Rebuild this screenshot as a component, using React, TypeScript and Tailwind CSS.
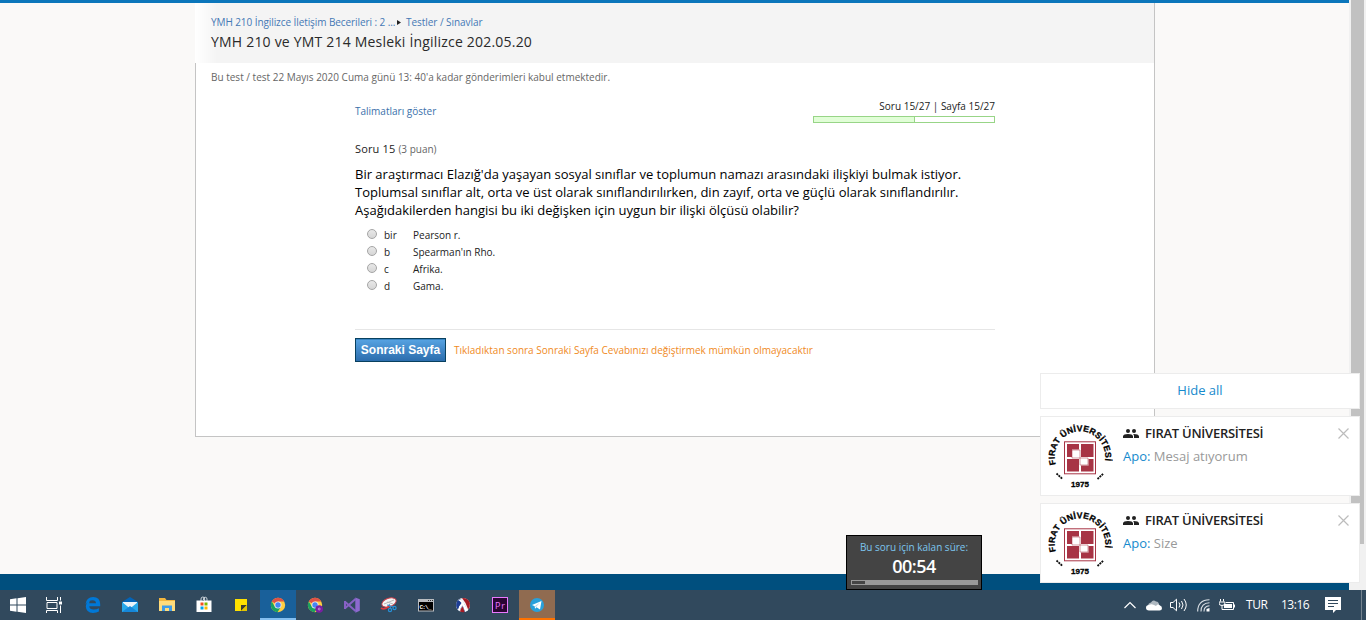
import React from "react";

const options = [
  { key: "bir", text: "Pearson r." },
  { key: "b", text: "Spearman'ın Rho." },
  { key: "c", text: "Afrika." },
  { key: "d", text: "Gama." },
];

function Header() {
  return (
    <header className="flex h-[60px] flex-col bg-[linear-gradient(to_right,#ffffff_0,#f4f4f4_22px)] pl-[16px]">
      <nav className="mt-[11px] flex h-[16px] items-center whitespace-nowrap text-[10px] leading-[16px] text-[#4478b4]">
        <span className="w-[186px] tracking-[-0.08px]">YMH 210 İngilizce İletişim Becerileri : 2 ...</span>
        <svg className="mr-[5px] h-[5px] w-[4px]" viewBox="0 0 4 5">
          <path d="M0 0 4 2.5 0 5Z" fill="#222" />
        </svg>
        <span className="tracking-[-0.05px]">Testler / Sınavlar</span>
      </nav>
      <h1 className="mt-[3px] whitespace-nowrap text-[14px] font-medium leading-[18px] tracking-[0.2px] text-[#2a2a2a]">
        YMH 210 ve YMT 214 Mesleki İngilizce 202.05.20
      </h1>
    </header>
  );
}

function Question() {
  return (
    <main className="flex h-[374px] flex-col border-b border-l border-[#c4c4c4] bg-white">
      <p className="mt-[6px] ml-[15px] h-[17px] whitespace-nowrap text-[10px] leading-[17px] text-[#666]">
        Bu test / test 22 Mayıs 2020 Cuma günü 13: 40'a kadar gönderimleri kabul etmektedir.
      </p>
      <div className="mt-[12px] ml-[158px] flex w-[641px] flex-col pl-px">
        <div className="flex h-[41px] justify-between">
          <a className="mt-[5px] text-[10px] leading-[16px] text-[#3a70aa]">Talimatları göster</a>
          <div className="flex flex-col items-end">
            <span className="text-[10px] font-medium leading-[16px] text-[#222]">Soru 15/27 | Sayfa 15/27</span>
            <div className="mt-[2px] flex h-[7px] w-[182px] border border-[#98d587]">
              <div className="w-[101px] border-r border-[#98d587] bg-[#e1fed7]" />
            </div>
          </div>
        </div>
        <div className="mt-[2px] flex h-[16px] items-baseline gap-[3px] whitespace-nowrap leading-[16px]">
          <b className="text-[11px] font-medium tracking-[0.15px] text-[#222]">Soru 15</b>
          <span className="text-[10px] text-[#666]">(3 puan)</span>
        </div>
        <div className="mt-[8px] whitespace-nowrap text-[13px] leading-[18px] text-black">
          <p>Bir araştırmacı Elazığ'da yaşayan sosyal sınıflar ve toplumun namazı arasındaki ilişkiyi bulmak istiyor.</p>
          <p>Toplumsal sınıflar alt, orta ve üst olarak sınıflandırılırken, din zayıf, orta ve güçlü olarak sınıflandırılır.</p>
          <p>Aşağıdakilerden hangisi bu iki değişken için uygun bir ilişki ölçüsü olabilir?</p>
        </div>
        <div className="mt-[7px] flex flex-col pl-[12px]">
          {options.map((o) => (
            <label key={o.key} className="flex h-[17px] text-[10px] leading-[18px] text-[#222]">
              <span className="mt-[3px] mr-[7px] h-[10px] w-[10px] rounded-full border border-[#a5a5a5] bg-linear-to-b from-[#e8e8e8] to-[#d6d6d6]" />
              <span className="w-[29px]">{o.key}</span>
              <span className="whitespace-nowrap">{o.text}</span>
            </label>
          ))}
        </div>
        <div className="mt-[35px] border-t border-[#e6e6e6]" />
        <div className="mt-[8px] flex items-center">
          <button className="h-[24px] w-[91px] whitespace-nowrap border border-[#08405f] bg-linear-to-b from-[#58a4e3] to-[#2c6dad] text-center font-['Liberation_Sans',sans-serif] text-[12px] font-bold leading-[21px] text-white shadow-[inset_0_1px_0_#3985c2]">
            Sonraki Sayfa
          </button>
          <span className="ml-[8px] whitespace-nowrap text-[10px] leading-[16px] text-[#f08a24]">
            Tıkladıktan sonra <span className="font-medium">Sonraki Sayfa</span> Cevabınızı değiştirmek mümkün olmayacaktır
          </span>
        </div>
      </div>
    </main>
  );
}

function Logo({ id }: { id: string }) {
  return (
    <svg className="ml-[6px] mt-[6px] h-[66px] w-[66px] shrink-0" viewBox="0 0 66 66">
      <path id={id} d="M8.9 41.4 A25.3 25.3 0 1 1 57.1 41.4" fill="none" />
      <text fontFamily="Liberation Sans, sans-serif" fontWeight="700" fontSize="8.6" fill="#000" stroke="#000" strokeWidth=".3">
        <textPath href={"#" + id} textLength="91" lengthAdjust="spacing">FIRAT ÜNİVERSİTESİ</textPath>
      </text>
      <path d="M9.5 50.5l6 5.5M50.5 56l6-5.5" stroke="#111" strokeWidth="1.8" strokeDasharray="2 .8" />
      <text x="33" y="63.5" textAnchor="middle" fontFamily="Liberation Sans, sans-serif" fontWeight="700" fontSize="8" stroke="#000" strokeWidth=".3">1975</text>
      <rect x="17.5" y="18.8" width="31" height="32" fill="#fff" stroke="#a73445" strokeWidth="1" />
      <path d="M20 21H32V34H20ZM34 21H46.500V34H34ZM20 36H32V48.500H20ZM34 36H46.500V48.500H34Z" fill="#a73445" />
      <path d="M25 26.500H33V35H25ZM33 34.500H41.500V42.500H33Z" fill="#fff" />
      <path d="M33 21V28M20 35H26M33 42V48.500M40 35H46.500" stroke="#fff" strokeWidth="1.600" />
      <path d="M25 27H33V35H41V42H33V35H25Z" fill="none" stroke="#a73445" strokeWidth=".5" />
    </svg>
  );
}

function Toast({ id, message }: { id: string; message: string }) {
  return (
    <section className="flex h-[80px] border border-[#ececec] bg-white">
      <Logo id={id} />
      <div className="ml-[10px] flex grow flex-col whitespace-nowrap">
        <div className="mt-[7px] flex h-[18px] items-center">
          <svg className="mr-[6px] h-[9px] w-[16px]" viewBox="0 0 16 9" fill="#222">
            <circle cx="5" cy="2" r="2" />
            <circle cx="11" cy="2" r="2" />
            <path d="M0 9V7.200Q.5 5 5 5t5 2.200V9ZM11 9V7Q11 5.700 10 5q5.300-.2 6 2.200V9Z" />
          </svg>
          <span className="text-[13px] font-semibold leading-[18px] tracking-[-0.25px] text-[#222]">FIRAT ÜNİVERSİTESİ</span>
        </div>
        <p className="mt-[5px] text-[13px] leading-[18px] text-[#999]">
          <span className="text-[#168acd]">Apo:</span> {message}
        </p>
      </div>
      <svg className="mt-[11px] mr-[10px] h-[11px] w-[11px]" viewBox="0 0 11 11" stroke="#bcbcbc" strokeWidth="1.200">
        <path d="M.5.5l10 10M10.500.5l-10 10" />
      </svg>
    </section>
  );
}

function Timer() {
  return (
    <aside className="absolute left-[846px] top-[535px] flex h-[55px] w-[136px] flex-col items-center border border-black bg-[#444] whitespace-nowrap">
      <span className="mt-[4px] text-[10px] leading-[14px] text-[#7cc4ee]">Bu soru için kalan süre:</span>
      <span className="mt-[1px] text-[18px] font-semibold leading-[22px] tracking-[-0.5px] text-white">00:54</span>
      <div className="mt-[3px] flex h-[5px] w-[127px] bg-[#999] p-px">
        <div className="w-[13px] bg-[#444]" />
      </div>
    </aside>
  );
}

function Chrome({ badge = false }: { badge?: boolean }) {
  return (
    <svg className="h-[16px] w-[16px] overflow-visible" viewBox="0 0 16 16">
      <circle cx="8" cy="8" r="7.200" fill="#ffcd41" />
      <path d="M8 8 1.800 4.400A7.200 7.200 0 0 1 14.400 4.600H8Z" fill="#de5246" />
      <path d="M1.800 4.400A7.200 7.200 0 0 0 7.500 15.200L11 9.700 8 8 4.900 9.700Z" fill="#1aa260" />
      <circle cx="8" cy="8" r="3.500" fill="#f1f1f1" />
      <circle cx="8" cy="8" r="2.700" fill="#4587f3" />
      {badge && (
        <>
          <circle cx="12.200" cy="12" r="3.800" fill="#7a1fa2" />
          <circle cx="12.200" cy="12" r="1" fill="none" stroke="#d9b5e8" strokeWidth=".7" />
        </>
      )}
    </svg>
  );
}

const ic = "h-[16px] w-[16px] overflow-visible";

const apps: React.ReactNode[] = [
  <svg className={ic} viewBox="0 0 16 16">
    <path d="M.5 1.200a1 1 0 0 1 1-1H9" fill="none" />
    <path d="M15.200 9.200H4.300q.3 3.200 4.200 3.400 3 .1 5.400-1.400v3.400Q11.500 16 8 16 1 15.600.8 9.300q.2-4.300 4.700-6.400Q4.300 4.300 4.200 6.200H11Q10.900 3.300 7.600 3.300 3.600 3.300.5 7.500 1.200.2 8.200 0q6.700.2 7 7Z" fill="#0078d7" />
  </svg>,
  <svg className={ic} viewBox="0 0 16 16">
    <path d="M0 5 8 0l8 5v3H0Z" fill="#0364b8" />
    <path d="M1 5h14v6H1Z" fill="#e9f3fa" />
    <path d="M0 5l8 6.500L16 5v10H0Z" fill="#28a8ea" />
    <path d="M0 15l8-6 8 6Z" fill="#1687d9" />
  </svg>,
  <svg className={ic} viewBox="0 0 16 16">
    <path d="M0 1h6l1.500 2H16v11H0Z" fill="#f4b73e" />
    <path d="M0 4h16v10H0Z" fill="#ffdc7b" />
    <path d="M3 14V8.500h10V14h-3v-3H6v3Z" fill="#3e9ce8" />
  </svg>,
  <svg className={ic} viewBox="0 0 16 16">
    <path d="M5 4V2q0-2 1.800-2T8.600 2v2M7.500 3V2q0-1.800 1.700-1.800T11 2v2" fill="none" stroke="#c9d1d8" />
    <path d="M.5 3.500h15V15h-15Z" fill="#fff" />
    <path d="M4.500 5.500h3v3h-3Z" fill="#f25022" />
    <path d="M8.500 5.500h3v3h-3Z" fill="#7fba00" />
    <path d="M4.500 9.500h3v3h-3Z" fill="#00a4ef" />
    <path d="M8.500 9.500h3v3h-3Z" fill="#ffb900" />
  </svg>,
  <svg className={ic} viewBox="0 0 16 16">
    <path d="M2 2h12v12H2Z" fill="#ffe000" />
    <path d="M8 8h6l-6 6Z" fill="#3c3c30" />
    <path d="M14 8v6H8Z" fill="#e4c400" />
  </svg>,
  <Chrome />,
  <Chrome badge />,
  <svg className={ic} viewBox="0 0 16 16">
    <path d="M.7 4.500 11.500 14M.7 11.500 11.500 2M1 4v8" fill="none" stroke="#8661c5" strokeWidth="2" />
    <path d="M11.300.4 15.800 2.300v11.500L11.300 15.800Z" fill="#8d69cf" />
  </svg>,
  <svg className={ic} viewBox="0 0 16 16">
    <ellipse cx="8" cy="5.500" rx="7.500" ry="4.200" fill="#f4f4f4" stroke="#c9404a" strokeWidth="1" transform="rotate(-20 8 5.500)" />
    <path d="M3 7 13 3M6 5l6 2" stroke="#b8b8b8" />
    <path d="M0 11q3 2 7-1l2-2" fill="none" stroke="#d63c40" strokeWidth="1.700" />
    <circle cx="9" cy="13" r="1.600" fill="none" stroke="#2690d8" strokeWidth="1.200" />
    <circle cx="13.500" cy="11" r="1.600" fill="none" stroke="#2690d8" strokeWidth="1.200" />
    <path d="M10 12 8 7M12.500 10 6 8" stroke="#358ed0" />
  </svg>,
  <svg className={ic} viewBox="0 0 16 16">
    <path d="M0 2h16v12.500H0Z" fill="#b9bcc0" />
    <path d="M1 5h14v8.500H1Z" fill="#000" />
    <path d="M10 3.500h1m1 0h1m1 0h1" stroke="#333" />
    <text x="1.500" y="11.800" fontFamily="Liberation Mono, monospace" fontSize="6" fontWeight="700" fill="#fff" textLength="12">C:\_</text>
  </svg>,
  <svg className={ic} viewBox="0 0 16 16">
    <circle cx="8" cy="8" r="7" fill="#f2f2f2" />
    <path d="M1.700 5Q2.500 2.600 4.800 1.900 8.500 4 12.300 13.500 10.500 15 9.500 15 8.500 11 7.500 9 5.500 11.500 4.500 14 .5 10.500 1.700 5" fill="#1d3e94" />
    <path d="M3 2.900Q7 1 9.600 7.500L13 13.500 10 15Q8.500 10 7.500 8.500 5.500 11 4.500 14.200L2.500 12.500Q4 8.500 6.500 6 5 4 3 3Z" fill="#fff" />
    <path d="M7 1Q13 .6 14.900 6q.5 4-1.700 6.500Q11.500 6 7 1Z" fill="#a51c25" />
    <path d="M2 5Q0 10 3 12.500 4 8.500 6 6.500 4.500 4 3 3.600Z" fill="#1d3e94" />
    <path d="M5 14.500Q6 11 7.500 9.500 9 12 9.500 15 7 15.600 5 14.500Z" fill="#a51c25" />
  </svg>,
  <svg className={ic} viewBox="0 0 16 16">
    <rect x=".5" y=".5" width="15" height="15" fill="#2a0634" stroke="#e979ff" />
    <text x="3" y="11.500" fontFamily="Open Sans, sans-serif" fontSize="9" fill="#ea77ff" textLength="10">Pr</text>
  </svg>,
  <svg className={ic} viewBox="0 0 16 16">
    <circle cx="8" cy="8" r="7" fill="#29a0da" />
    <path d="M3 8 12.500 4 11 12.500 7.500 10.200 6 11.800 5.700 9.200Z" fill="#fff" />
    <path d="M5.700 9.200 11 5.600 7 10Z" fill="#b8d8eb" />
  </svg>,
];

function Taskbar() {
  return (
    <footer className="flex h-[30px] shrink-0 items-center bg-[#31495d] text-white">
      <div className="flex w-[36px] justify-center">
        <svg className="h-[16px] w-[16px]" viewBox="0 0 16 16" fill="#fff">
          <path d="M0 2.300 6.500 1.300V7.500H0ZM7.500 1.200 16 0V7.500H7.500ZM0 8.500H6.500V14.700L0 13.700ZM7.500 8.500H16V16L7.500 14.800Z" />
        </svg>
      </div>
      <div className="mr-[3px] flex w-[36px] justify-center">
        <svg className="h-[16px] w-[17px]" viewBox="0 0 17 16" fill="none" stroke="#fff">
          <path d="M.5 0V3.500H11.500V0M.5 16V13.500H11.500V16M1 5.500H11V11.500H1ZM14.500 0V3.500M14.500 8.500V16" />
          <path d="M13 4.500h3v3h-3Z" fill="#fff" stroke="none" />
        </svg>
      </div>
      {apps.map((icon, i) => (
        <div
          key={i}
          className={
            "mr-px flex h-[30px] w-[36px] items-center justify-center border-b-2 " +
            (i === 5 ? "border-[#83bff0] bg-[#19609a]" : i === 12 ? "border-[#ff7200] bg-[#906b50]" : "border-transparent")
          }
        >
          <div className="mt-[2px]">{icon}</div>
        </div>
      ))}
      <div className="ml-auto flex h-full items-center whitespace-nowrap text-[12px]">
        <svg className="mr-[10px] h-[8px] w-[12px]" viewBox="0 0 12 8" fill="none" stroke="#fff" strokeWidth="1.200">
          <path d="M.5 7 6 1.500 11.500 7" />
        </svg>
        <svg className="mr-[8px] h-[11px] w-[16px]" viewBox="0 0 16 11">
          <path d="M2 6Q2 3 5 2.500 7-.8 10 1.500 13 1.500 13 5L8 8Z" fill="#aeb8c0" />
          <path d="M3 10.500Q0 10.500 0 7.800T3 5Q5 3.500 8 5L10 6Q12 3.500 14 5.500 16 6 16 8.300 16 10.500 13.500 10.500Z" fill="#fff" />
        </svg>
        <svg className="mr-[10px] h-[14px] w-[17px]" viewBox="0 0 17 14" fill="none" stroke="#fff">
          <path d="M.5 4.500H3L6.500 1.200V12.800L3 9.500H.5ZM9 4.500q2 2.500 0 5M11.500 3q3 4 0 8M14 1q4.500 6 0 12" />
        </svg>
        <svg className="mr-[9px] h-[13px] w-[13px]" viewBox="0 0 13 13" fill="none" stroke="#dce2e7" strokeWidth="1.100">
          <path d="M.7 12.500Q.7 1 12.500.8M4 12.500Q4 4 12.500 3.800M7 12.500Q7 7 12.500 6.800" />
          <path d="M9.500 12.500V10L12.500 9V12.500Z" fill="#fff" stroke="none" />
        </svg>
        <svg className="mr-[11px] h-[12px] w-[16px]" viewBox="0 0 16 12" fill="none" stroke="#fff">
          <path d="M1.500 0V2.500M4.500 0V2.500M0 3H6V4Q6 6.500 3 6.500T0 4ZM3 6.500V10.500H14.500V3.500H7M15.500 5.500V8.500" />
          <path d="M5 5h8v4H5Z" fill="#fff" stroke="none" />
        </svg>
        <span className="w-[35px] tracking-[-0.4px]">TUR</span>
        <span className="w-[44px] tracking-[-0.5px]">13:16</span>
        <svg className="mr-[20px] h-[16px] w-[16px]" viewBox="0 0 16 16">
          <path d="M0 0H16V13H11L8 16V13H0Z" fill="#fff" />
          <path d="M3 3.500H13M3 6.500H13M3 9.500H9" stroke="#31495d" />
        </svg>
        <div className="mr-[4px] h-full w-px bg-[#74838f]" />
      </div>
    </footer>
  );
}

export default function App() {
  return (
    <div className="relative flex h-[620px] w-[1366px] flex-col overflow-hidden bg-[#f1f1f1] font-['Open_Sans',sans-serif]">
      <div className="flex h-[590px]">
        <div className="flex w-[1349px] flex-col bg-[#faf9f8]">
          <div className="h-[3px] bg-[#0b76bb]" />
          <div className="ml-[195px] w-[960px] border-r border-[#c4c4c4]">
            <Header />
            <Question />
          </div>
          <div className="mt-auto h-[16px] bg-[#004f7e]" />
        </div>
        <div className="flex w-[17px] justify-center bg-[#f1f1f1]">
          <div className="h-[544px] w-[13px] bg-[#c1c1c1]" />
        </div>
      </div>
      <Taskbar />
      <Timer />
      <div className="absolute left-[1040px] top-[373px] flex w-[320px] flex-col gap-[7px]">
        <button className="h-[36px] border border-[#ececec] bg-white text-[13px] text-[#168acd]">Hide all</button>
        <Toast id="ring-a" message="Mesaj atıyorum" />
        <Toast id="ring-b" message="Size" />
      </div>
    </div>
  );
}
